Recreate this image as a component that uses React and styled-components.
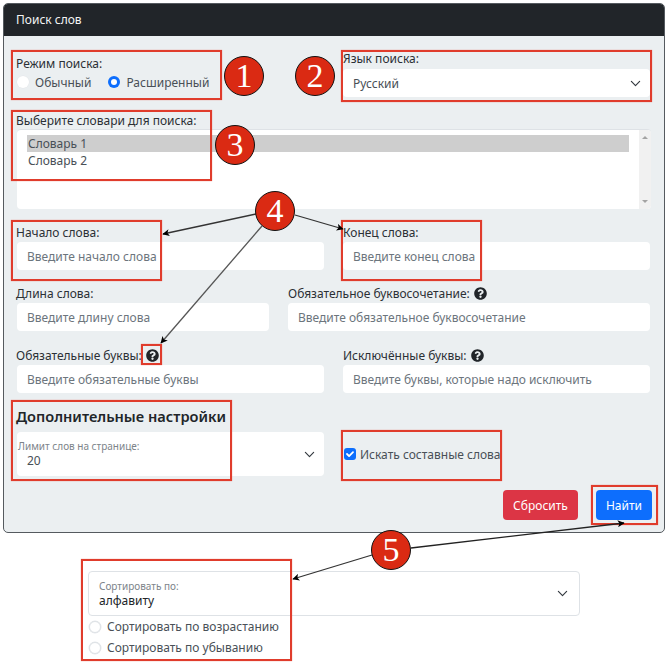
import React from 'react';
import styled, { createGlobalStyle, css } from 'styled-components';
import { FaQuestionCircle } from 'react-icons/fa';

const GlobalStyle = createGlobalStyle`
  html, body {
    margin: 0;
    padding: 0;
    background: #fff;
  }
  * {
    box-sizing: border-box;
  }
`;

const boxes = [
  { x: 11, y: 50, w: 211, h: 50 },
  { x: 341, y: 50, w: 311, h: 52 },
  { x: 11, y: 110, w: 201, h: 71 },
  { x: 11, y: 220, w: 151, h: 61 },
  { x: 341, y: 220, w: 141, h: 61 },
  { x: 141, y: 344, w: 21, h: 21 },
  { x: 11, y: 400, w: 221, h: 81 },
  { x: 341, y: 430, w: 161, h: 51 },
  { x: 591, y: 485, w: 67, h: 40 },
  { x: 81, y: 559, w: 211, h: 102 },
];

const badges = [
  { n: 1, x: 244, y: 76 },
  { n: 2, x: 315, y: 76 },
  { n: 3, x: 235, y: 145 },
  { n: 4, x: 275, y: 211 },
  { n: 5, x: 391, y: 550 },
];

const arrows = [
  { x1: 256, y1: 214, x2: 163, y2: 234, color: '#333' },
  { x1: 295, y1: 215, x2: 343, y2: 229, color: '#333' },
  { x1: 262, y1: 226, x2: 161, y2: 343, color: '#555' },
  { x1: 411, y1: 548, x2: 624, y2: 523, color: '#222' },
  { x1: 372, y1: 555, x2: 293, y2: 579, color: '#333' },
];

const Chevron = () => (
  <ChevronIcon viewBox='0 0 16 16'>
    <path d='m2 5 6 6 6-6' fill='none' stroke='#343a40' strokeWidth='1.7' strokeLinecap='round' strokeLinejoin='round' />
  </ChevronIcon>
);

const Field = ({ label, placeholder, help }) => (
  <Column>
    <Label>
      {label}
      {help && <HelpIcon />}
    </Label>
    <Input placeholder={placeholder} readOnly />
  </Column>
);

const App = () => {
  return (
    <Page>
      <GlobalStyle />
      <Panel>
        <PanelHeader>Поиск слов</PanelHeader>
        <PanelBody>
          <EvenRow>
            <ModeColumn>
              <Label>Режим поиска:</Label>
              <RadioRow>
                <RadioItem>
                  <Radio />
                  Обычный
                </RadioItem>
                <RadioItem>
                  <Radio $checked />
                  Расширенный
                </RadioItem>
              </RadioRow>
            </ModeColumn>
            <Column>
              <Label $raised>Язык поиска:</Label>
              <Select>
                Русский
                <Chevron />
              </Select>
            </Column>
          </EvenRow>

          <Column>
            <Label $short>Выберите словари для поиска:</Label>
            <ListBox>
              <ListItems>
                <ListItem $selected>Словарь 1</ListItem>
                <ListItem>Словарь 2</ListItem>
              </ListItems>
              <ScrollTrack>
                <ScrollArrow $up />
                <ScrollArrow />
              </ScrollTrack>
            </ListBox>
          </Column>

          <EvenRow>
            <Field label='Начало слова:' placeholder='Введите начало слова' />
            <Field label='Конец слова:' placeholder='Введите конец слова' />
          </EvenRow>

          <WideRow>
            <Field label='Длина слова:' placeholder='Введите длину слова' />
            <Field label='Обязательное буквосочетание:' placeholder='Введите обязательное буквосочетание' help />
          </WideRow>

          <EvenRow $extra>
            <Field label='Обязательные буквы:' placeholder='Введите обязательные буквы' help />
            <Field label='Исключённые буквы:' placeholder='Введите буквы, которые надо исключить' help />
          </EvenRow>

          <Heading>Дополнительные настройки</Heading>

          <EvenRow>
            <FloatingSelect>
              <FloatingText>
                <FloatingLabel>Лимит слов на странице:</FloatingLabel>
                <FloatingValue>20</FloatingValue>
              </FloatingText>
              <Chevron />
            </FloatingSelect>
            <CheckRow>
              <CheckBox>
                <svg viewBox='0 0 20 20' width='12' height='12'>
                  <path d='m5 10 3.5 3.5L15 7' fill='none' stroke='#fff' strokeWidth='3' strokeLinecap='round' strokeLinejoin='round' />
                </svg>
              </CheckBox>
              Искать составные слова
            </CheckRow>
          </EvenRow>

          <Buttons>
            <Button $color='#dc3545'>Сбросить</Button>
            <Button $color='#0d6efd' $narrow>
              Найти
            </Button>
          </Buttons>
        </PanelBody>
      </Panel>

      <SortBlock>
        <SortSelect>
          <FloatingText $inset>
            <FloatingLabel>Сортировать по:</FloatingLabel>
            <SortValue>алфавиту</SortValue>
          </FloatingText>
          <Chevron />
        </SortSelect>
        <SortOption>
          <Radio $bordered />
          Сортировать по возрастанию
        </SortOption>
        <SortOption>
          <Radio $bordered />
          Сортировать по убыванию
        </SortOption>
      </SortBlock>

      {boxes.map((box) => (
        <RedBox key={`${box.x}-${box.y}`} $x={box.x} $y={box.y} $w={box.w} $h={box.h} />
      ))}
      <ArrowLayer viewBox='0 0 671 662'>
        <defs>
          <marker id='head' viewBox='0 0 10 10' refX='9' refY='5' markerWidth='8' markerHeight='7' markerUnits='userSpaceOnUse' orient='auto'>
            <path d='M0 0 10 5 0 10 2.5 5z' fill='#000' />
          </marker>
        </defs>
        {arrows.map((a) => (
          <line key={a.x2} x1={a.x1} y1={a.y1} x2={a.x2} y2={a.y2} stroke={a.color} strokeWidth='1.3' markerEnd='url(#head)' />
        ))}
      </ArrowLayer>
      {badges.map((b) => (
        <Badge key={b.n} $x={b.x} $y={b.y}>
          {b.n}
        </Badge>
      ))}
    </Page>
  );
};

const Page = styled.div`
  position: relative;
  width: 671px;
  height: 662px;
  padding: 3px 0 0 3px;
  overflow: hidden;
  background: #fff;
  color: #212529;
  font-family: 'Noto Sans', 'Open Sans', sans-serif;
  font-size: 12px;
`;

const Panel = styled.div`
  width: 662px;
  height: 530px;
  border: 1px solid #555a5f;
  border-radius: 5px;
  background: #ebeff1;
  overflow: hidden;
`;

const PanelHeader = styled.div`
  height: 32px;
  padding-left: 12px;
  line-height: 31px;
  background: #212529;
  color: #f4f4f4;
`;

const PanelBody = styled.div`
  display: flex;
  flex-direction: column;
  gap: 14px;
  padding: 14px 13px 0;
`;

const Column = styled.div`
  display: flex;
  flex-direction: column;
  min-width: 0;
`;

const ModeColumn = styled(Column)`
  padding-top: 4px;
`;

const Label = styled.label`
  display: flex;
  align-items: center;
  gap: 3px;
  height: ${(p) => (p.$short ? '18px' : '19px')};
  margin-left: -1px;
  padding-bottom: ${(p) => (p.$raised ? '2px' : '0')};
  color: #2b3035;
  white-space: nowrap;
`;

const twoColumns = css`
  display: grid;
  gap: 19px;

  & > div:nth-child(2) > ${Label} {
    margin-left: 0;
  }
`;

const EvenRow = styled.div`
  ${twoColumns}
  grid-template-columns: 307px 307px;
  margin-top: ${(p) => (p.$extra ? '1px' : '0')};
`;

const WideRow = styled.div`
  ${twoColumns}
  grid-template-columns: 252px 362px;
`;

const HelpIcon = styled(FaQuestionCircle)`
  width: 13px;
  height: 13px;
  margin-left: 1px;
  color: #212529;
`;

const RadioRow = styled.div`
  display: flex;
  gap: 17px;
  height: 18px;
`;

const RadioItem = styled.div`
  display: flex;
  align-items: center;
  gap: 6px;
  color: #495057;
`;

const Radio = styled.span`
  flex: none;
  width: 12px;
  height: 12px;
  border-radius: 50%;
  background: ${(p) => (p.$checked ? '#0d6efd' : '#fff')};
  border: ${(p) => (p.$bordered ? '1px solid #dee2e6' : 'none')};
  box-shadow: ${(p) => (p.$checked ? 'none' : '0 0 0 0.5px #e4e7ea')};
  display: flex;
  align-items: center;
  justify-content: center;

  &::after {
    content: '';
    display: ${(p) => (p.$checked ? 'block' : 'none')};
    width: 6px;
    height: 6px;
    border-radius: 50%;
    background: #fff;
  }
`;

const Select = styled.div`
  display: flex;
  align-items: center;
  justify-content: space-between;
  height: 28px;
  padding: 0 9px 0 10px;
  border-radius: 4px;
  background: #fff;
  color: #495057;
`;

const ChevronIcon = styled.svg`
  flex: none;
  width: 11px;
  height: 11px;
`;

const ListBox = styled.div`
  display: flex;
  height: 80px;
  border-top: 1px solid #dee2e6;
  border-radius: 4px;
  background: #fff;
  overflow: hidden;
`;

const ListItems = styled.div`
  flex: 1;
  padding: 5px 10px 0 10px;
`;

const ListItem = styled.div`
  height: 17px;
  line-height: 17px;
  padding-left: 1px;
  color: #495057;
  background: ${(p) => (p.$selected ? '#cecece' : 'transparent')};
`;

const ScrollTrack = styled.div`
  display: flex;
  flex-direction: column;
  align-items: center;
  justify-content: space-between;
  width: 12px;
  padding: 6px 0;
  background: #f1f1f1;
`;

const ScrollArrow = styled.span`
  width: 0;
  height: 0;
  border-left: 3px solid transparent;
  border-right: 3px solid transparent;
  border-bottom: ${(p) => (p.$up ? '3px solid #a3a3a3' : 'none')};
  border-top: ${(p) => (p.$up ? 'none' : '3px solid #a3a3a3')};
`;

const Input = styled.input`
  width: 100%;
  height: 28px;
  padding: 0 10px;
  border: none;
  border-radius: 4px;
  outline: none;
  background: #fff;
  font: inherit;
  color: #495057;

  &::placeholder {
    color: #6c757d;
    opacity: 1;
  }
`;

const Heading = styled.h5`
  margin: -1px 0 -8px -1px;
  height: 20px;
  font-size: 14.6px;
  line-height: 20px;
  font-weight: 600;
  color: #212529;
`;

const FloatingSelect = styled.div`
  display: flex;
  align-items: center;
  justify-content: space-between;
  height: 44px;
  padding-right: 9px;
  border-radius: 4px;
  background: #fff;
`;

const FloatingText = styled.div`
  display: flex;
  flex-direction: column;
  padding-left: ${(p) => (p.$inset ? '10px' : '1px')};
`;

const FloatingLabel = styled.span`
  font-size: 10px;
  line-height: 14px;
  color: #7d848a;
`;

const FloatingValue = styled.span`
  padding-left: 9px;
  line-height: 16px;
  color: #495057;
`;

const CheckRow = styled.div`
  display: flex;
  align-items: center;
  gap: 4px;
  padding-left: 1px;
  color: #495057;
  white-space: nowrap;
`;

const CheckBox = styled.span`
  display: flex;
  align-items: center;
  justify-content: center;
  width: 12px;
  height: 12px;
  border-radius: 3px;
  background: #0d6efd;
`;

const Buttons = styled.div`
  display: flex;
  justify-content: flex-end;
  gap: 18px;
  margin-right: -1px;
`;

const Button = styled.button`
  width: ${(p) => (p.$narrow ? '56px' : '75px')};
  height: 30px;
  padding: 0;
  border: none;
  border-radius: 4px;
  background: ${(p) => p.$color};
  color: #fff;
  font: inherit;
`;

const SortBlock = styled.div`
  display: flex;
  flex-direction: column;
  width: 492px;
  margin: 38px 0 0 85px;
`;

const SortSelect = styled.div`
  display: flex;
  align-items: center;
  justify-content: space-between;
  height: 45px;
  padding-right: 11px;
  border: 1px solid #dee2e6;
  border-radius: 4px;
  background: #fff;
`;

const SortValue = styled.span`
  line-height: 16px;
  color: #212529;
`;

const SortOption = styled.div`
  display: flex;
  align-items: center;
  gap: 6px;
  height: 21px;
  padding-left: 1px;
  color: #495057;
`;

const RedBox = styled.div`
  position: absolute;
  left: ${(p) => p.$x}px;
  top: ${(p) => p.$y}px;
  width: ${(p) => p.$w}px;
  height: ${(p) => p.$h}px;
  border: 2px solid #e03c2c;
  box-shadow: 0 0 1px rgba(224, 60, 44, 0.6);
  pointer-events: none;
`;

const ArrowLayer = styled.svg`
  position: absolute;
  left: 0;
  top: 0;
  width: 671px;
  height: 662px;
  pointer-events: none;
`;

const Badge = styled.div`
  position: absolute;
  left: ${(p) => p.$x - 20}px;
  top: ${(p) => p.$y - 20}px;
  width: 40px;
  height: 40px;
  border: 1.5px solid #111;
  border-radius: 50%;
  background: #da2a13;
  color: #fff;
  font-family: 'Liberation Serif', serif;
  font-size: 34px;
  line-height: 37px;
  text-align: center;
`;

export default App;
